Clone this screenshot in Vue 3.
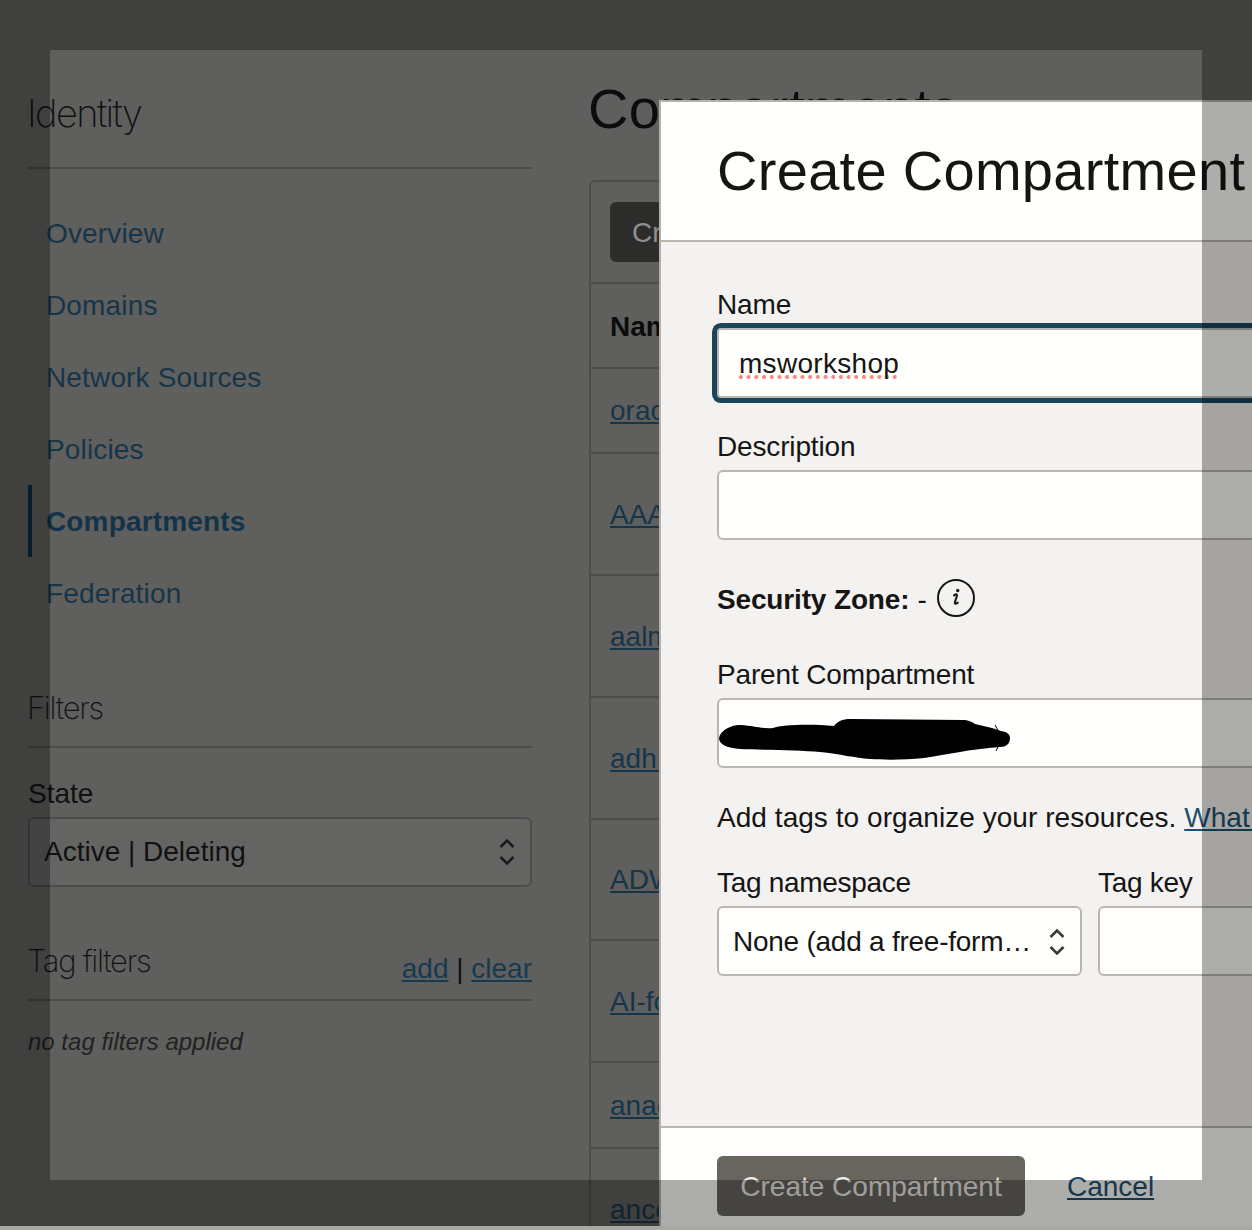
<script setup>
const navItems = [
  { label: 'Overview' },
  { label: 'Domains' },
  { label: 'Network Sources' },
  { label: 'Policies' },
  { label: 'Compartments', active: true },
  { label: 'Federation' }
]
const rows = [
  { name: 'oracle-root', h: 85 },
  { name: 'AAA_demo', h: 122 },
  { name: 'aalmeida', h: 122 },
  { name: 'adh.lab', h: 122 },
  { name: 'ADW-lab', h: 121 },
  { name: 'AI-foundation', h: 122 },
  { name: 'anacostia', h: 86 },
  { name: 'ancestry', h: 122 }
]
</script>

<template>
  <div class="screen">
    <div class="page">
      <aside class="sidebar">
        <h2 class="side-title">Identity</h2>
        <nav class="nav">
          <a v-for="item in navItems" :key="item.label" class="nav-item" :class="{ active: item.active }">{{ item.label }}</a>
        </nav>
        <h3 class="filters-title">Filters</h3>
        <label class="state-label">State</label>
        <div class="side-select">
          <span>Active | Deleting</span>
          <svg class="chev" width="18" height="30" viewBox="0 0 18 30"><path d="M2.500 10 9 3.500 15.500 10M2.500 20 9 26.500 15.500 20" fill="none" stroke="currentColor" stroke-width="2.600"/></svg>
        </div>
        <div class="tag-head">
          <span class="tag-title">Tag filters</span>
          <span class="tag-actions"><u>add</u> <i>|</i> <u>clear</u></span>
        </div>
        <p class="no-tags">no tag filters applied</p>
      </aside>
      <main class="main">
        <h1 class="page-title">Compartments</h1>
        <section class="panel">
          <div class="toolbar"><button class="create-bg">Create Compartment</button></div>
          <div class="row head"><span>Name</span></div>
          <div v-for="r in rows" :key="r.name" class="row" :style="{ height: r.h + 'px' }"><u>{{ r.name }}</u></div>
        </section>
      </main>
    </div>

    <div class="modal">
      <header class="modal-head"><h2>Create Compartment</h2></header>
      <div class="modal-body">
        <label class="lbl lbl-name">Name</label>
        <div class="input focus"><span class="spell">msworkshop</span></div>
        <label class="lbl lbl-desc">Description</label>
        <div class="input"></div>
        <div class="zone">
          <b>Security Zone:</b><span class="dash">-</span>
          <svg class="info" width="38" height="38" viewBox="0 0 38 38"><circle cx="19" cy="19" r="18" fill="none" stroke="#161513" stroke-width="2"/><path d="M17 16.500c1-1.200 3-1.800 3-.2 0 1.400-2.200 6-2.200 7.600 0 1.300 1.800 1 3-.4" fill="none" stroke="#161513" stroke-width="2" stroke-linecap="round"/><circle cx="20.700" cy="11.500" r="1.700" fill="#161513"/></svg>
        </div>
        <label class="lbl lbl-parent">Parent Compartment</label>
        <div class="input parent">
          <svg class="blob" width="300" height="46" viewBox="715 715 300 46"><path d="M719 737C720 729 733 723 741 724 755 725 762 728 773 727 783 723 815 723 834 725 838 719 845 718 850 718L965 719C972 720 973 722 975 723L992 727 1001 730C1008 731 1010 734 1010 737 1010 743 1006 746 1000 746 970 748 945 754 924 757 905 759 885 759 870 758 855 757 840 753 820 751 800 749 765 749 740 748 728 747 719 744 719 737Z" fill="#000"/><path d="M995 724l4 7M999 744l-3 6" fill="none" stroke="#000" stroke-width="1"/></svg>
        </div>
        <p class="tags-line">Add tags to organize your resources. <u>What can I do with tagging?</u></p>
        <div class="tag-grid">
          <div class="tag-ns">
            <label class="lbl">Tag namespace</label>
            <div class="select">
              <span>None (add a free-form…</span>
              <svg class="chev" width="18" height="30" viewBox="0 0 18 30"><path d="M2.500 10 9 3.500 15.500 10M2.500 20 9 26.500 15.500 20" fill="none" stroke="currentColor" stroke-width="2.600"/></svg>
            </div>
          </div>
          <div class="tag-key">
            <label class="lbl">Tag key</label>
            <div class="input"></div>
          </div>
        </div>
      </div>
      <footer class="modal-foot">
        <button class="create">Create Compartment</button>
        <a class="cancel">Cancel</a>
      </footer>
    </div>

    <div class="spotlight"></div>
  </div>
</template>

<style>
html, body { margin: 0; padding: 0; background: #a8a8a6; }
</style>

<style scoped>
* { box-sizing: border-box; }
.screen {
  position: relative;
  width: 1252px;
  height: 1230px;
  overflow: hidden;
  background: #f6f6f4;
  font-family: "Liberation Sans", Arial, sans-serif;
  color: #111;
}
.page {
  display: flex;
  height: 1226px;
  overflow: hidden;
  background: #5f5f5e;
  padding-left: 28px;
}
.sidebar { width: 504px; flex: none; }
.side-title {
  margin: 0;
  height: 169px;
  padding-top: 90px;
  font: 200 38px/46px Inter, sans-serif;
  letter-spacing: -1.600px;
  text-indent: -1px;
  border-bottom: 2px solid #4c4c4a;
  color: #111;
}
.nav { display: flex; flex-direction: column; margin-top: 28px; }
.nav-item {
  height: 72px;
  line-height: 74px;
  padding-left: 18px;
  font-size: 28px;
  letter-spacing: 0.150px;
  color: #173549;
}
.nav-item.active {
  font-weight: 700;
  border-left: 4px solid #0c2a3d;
  padding-left: 14px;
  color: #13334a;
}
.filters-title {
  margin: 59px 0 0;
  height: 60px;
  font: 200 31px/40px Inter, sans-serif;
  letter-spacing: -1.300px;
  text-indent: -1px;
  border-bottom: 2px solid #4c4c4a;
  color: #111;
}
.state-label { display: block; margin-top: 30px; font-size: 28px; line-height: 32px; color: #111; }
.side-select {
  display: flex;
  align-items: center;
  justify-content: space-between;
  height: 70px;
  margin-top: 7px;
  padding: 0 14px;
  border: 2px solid #4c4c4a;
  border-radius: 6px;
  background: #646463;
  font-size: 28px;
  color: #111;
}
.chev { color: #1a1a1a; }
.tag-head {
  display: flex;
  justify-content: space-between;
  align-items: flex-end;
  height: 114px;
  padding-bottom: 14px;
  border-bottom: 2px solid #4c4c4a;
}
.tag-title { font: 200 31px/40px Inter, sans-serif; letter-spacing: -1.300px; position: relative; top: -4px; left: -1px; }
.tag-actions { font-size: 28px; line-height: 32px; color: #173a51; }
.tag-actions i { font-style: normal; color: #111; }
.no-tags { margin: 26px 0 0; font-size: 24px; line-height: 30px; font-style: italic; color: #222; }

.main { margin-left: 57px; flex: 1; min-width: 0; position: relative; }
.page-title {
  margin: 0;
  height: 180px;
  padding-top: 75px;
  font-size: 56px;
  line-height: 68px;
  font-weight: 400;
  letter-spacing: 0.300px;
  text-indent: -1px;
  white-space: nowrap;
  color: #0c0c0c;
}
.panel {
  border: 2px solid #4c4c4a;
  border-right: 0;
  border-bottom: 0;
  border-radius: 6px 0 0 0;
}
.toolbar { height: 102px; padding: 20px 19px; border-bottom: 2px solid #4c4c4a; }
.create-bg {
  height: 60px;
  width: 308px;
  border: 0;
  border-radius: 6px;
  background: #2c2c2a;
  color: #8f8f8d;
  font: 28px "Liberation Sans", Arial, sans-serif;
  text-align: left;
  padding: 2px 0 0 22px;
}
.row {
  display: flex;
  align-items: center;
  padding: 1px 0 0 19px;
  font-size: 28px;
  color: #173549;
  border-bottom: 2px solid #4c4c4a;
  white-space: nowrap;
}
.row.head { height: 85px; padding-top: 3px; font-weight: 700; color: #0c0c0c; }

.modal {
  position: absolute;
  left: 659px;
  top: 100px;
  width: 720px;
  height: 1126px;
  display: flex;
  flex-direction: column;
  background: #f3f2f1;
  border-left: 2px solid #b5b0aa;
  border-top: 2px solid #b5b0aa;
  color: #161513;
}
.modal-head {
  flex: none;
  height: 140px;
  padding: 32px 56px 0;
  background: #fffffd;
  border-bottom: 2px solid #bcb6b0;
}
.modal-head h2 {
  margin: 0;
  font-size: 56px;
  line-height: 74px;
  font-weight: 400;
  white-space: nowrap;
  letter-spacing: 0.300px;
}
.modal-body { flex: 1; padding: 0 56px; min-height: 0; }
.lbl { display: block; font-size: 28px; line-height: 32px; letter-spacing: -0.150px; }
.lbl-name { margin-top: 47px; }
.lbl-desc { margin-top: 33px; }
.lbl-parent { margin-top: 42px; }
.input {
  height: 70px;
  margin-top: 7px;
  padding-left: 20px;
  display: flex;
  align-items: center;
  background: #fffffd;
  border: 2px solid #bcb6b0;
  border-radius: 6px;
  font-size: 28px;
}
.input.focus {
  box-shadow: 0 0 0 5px #1a4459;
  border-radius: 4px;
}
.spell {
  display: inline-block;
  height: 32px;
  line-height: 34px;
  letter-spacing: 0.300px;
  background: radial-gradient(circle at 2px 2px, #fb8a80 1.900px, transparent 2.200px) left bottom / 7.700px 4px repeat-x;
}
.parent { padding-left: 0; position: relative; overflow: hidden; }
.blob { position: absolute; left: -4px; top: 16px; }
.zone {
  display: flex;
  align-items: center;
  height: 38px;
  margin-top: 39px;
  font-size: 28px;
}
.zone b { font-weight: 700; padding-top: 4px; letter-spacing: -0.150px; }
.dash { margin: 0 10px 0 8px; padding-top: 4px; }
.tags-line { margin: 34px 0 0; font-size: 28px; line-height: 32px; letter-spacing: 0.050px; white-space: nowrap; }
.tags-line u { color: #1f5270; }
.tag-grid { display: flex; gap: 16px; margin-top: 33px; }
.tag-grid .lbl { letter-spacing: -0.300px; }
.tag-ns { width: 365px; flex: none; }
.tag-key { flex: 1; }
.select {
  height: 70px;
  margin-top: 7px;
  padding: 1px 14px 0;
  display: flex;
  align-items: center;
  justify-content: space-between;
  background: #fffffd;
  border: 2px solid #bcb6b0;
  border-radius: 6px;
  font-size: 28px;
  letter-spacing: -0.250px;
  white-space: nowrap;
}
.select .chev { color: #3c3a37; }
.modal-foot {
  flex: none;
  height: 100px;
  padding: 28px 56px 0;
  display: flex;
  align-items: flex-start;
  gap: 42px;
  background: #fffffd;
  border-top: 2px solid #bcb6b0;
}
.create {
  width: 308px;
  height: 60px;
  border: 0;
  border-radius: 6px;
  background: #68655f;
  color: #ece9e4;
  font: 28px "Liberation Sans", Arial, sans-serif;
  white-space: nowrap;
  padding: 2px 0 0;
}
.cancel {
  line-height: 62px;
  font-size: 28px;
  text-decoration: underline;
  color: #1f5270;
}

/* The bright rectangle left by the capture: everything around it is darkened. */
.spotlight {
  position: absolute;
  left: 50px;
  top: 50px;
  width: 1152px;
  height: 1130px;
  box-shadow: 0 0 0 1400px rgba(0, 0, 0, 0.32);
  pointer-events: none;
}
</style>
